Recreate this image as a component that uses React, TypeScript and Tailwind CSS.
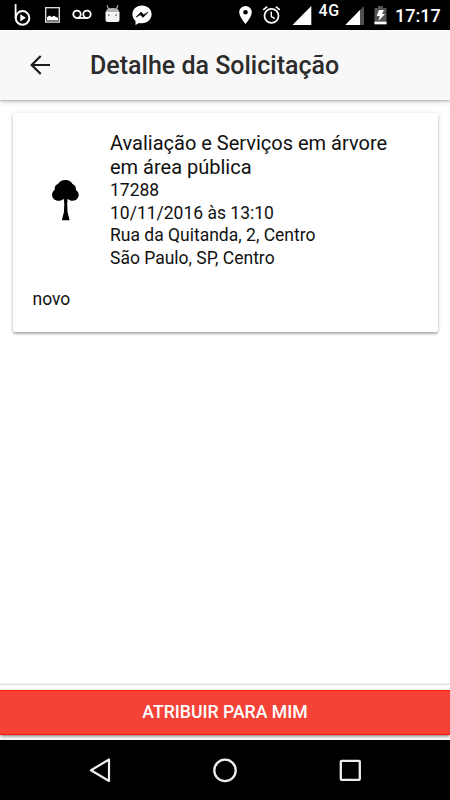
import React from "react";

function StatusBar() {
  return (
    <div className="flex h-[30px] shrink-0 items-center justify-between bg-black pl-[13px] pr-[9px] text-white">
      <div className="flex h-full items-center">
        <svg className="h-[30px] w-[20px]" viewBox="0 0 20 30" fill="none">
          <path d="M2.6 4V18" stroke="#fff" strokeWidth="1.800" />
          <circle cx="9.500" cy="17.900" r="6.800" stroke="#fff" strokeWidth="2" />
          <path d="M7.300 14.200l5.600 3.600-5.600 3.700z" fill="#fff" />
        </svg>
        <svg className="ml-[12px] h-[30px] w-[15px]" viewBox="0 0 15 30" fill="none">
          <rect x=".7" y="7.700" width="13.600" height="14.400" stroke="#e6e6e6" strokeWidth="1.300" />
          <path d="M2 20.500v-3.200l2.300-1.800 2.500 1.400 2-1.200L13 18v2.500z" fill="#fff" />
        </svg>
        <svg className="ml-[12px] h-[30px] w-[20px]" viewBox="0 0 20 30" fill="none" stroke="#fff" strokeWidth="1.800">
          <circle cx="5" cy="14.300" r="3.700" />
          <circle cx="15" cy="14.300" r="3.700" />
          <path d="M5 18h10" />
        </svg>
        <svg className="ml-[13px] h-[30px] w-[15px]" viewBox="0 0 15 30">
          <path d="M2 5.200l1.800 4.200M13 5.200l-1.800 4.200" stroke="#aaa" strokeWidth="1.200" />
          <path d="M.7 12.500C.8 9.300 3.500 8 7.500 8s6.700 1.300 6.800 4.500z" fill="#b4b4b4" />
          <path d="M.5 12h14v7.500q0 2.500-2.500 2.500H3q-2.500 0-2.500-2.500z" fill="#f4f4f4" />
          <circle cx="3.800" cy="15" r=".8" fill="#444" />
          <circle cx="11.200" cy="15" r=".8" fill="#444" />
        </svg>
        <svg className="ml-[12px] h-[30px] w-[20px]" viewBox="0 0 20 30">
          <path d="M10 5.500C4.500 5.500.4 9.300.4 14.300c0 2.700 1.200 5 3.100 6.600v4l3.500-2c1 .2 2 .3 3 .3 5.500 0 9.600-3.900 9.600-8.900S15.500 5.500 10 5.500z" fill="#fff" />
          <path d="M4 17.200l5-5.200 2.700 2.700 4.300-2.500-5 5.200-2.700-2.700z" fill="#000" stroke="#000" strokeWidth=".6" />
        </svg>
      </div>
      <div className="flex h-full items-center">
        <svg className="h-[30px] w-[13px]" viewBox="0 0 13 30">
          <path fillRule="evenodd" d="M6.500 6A6.300 6.300 0 0 0 .2 12.300C.2 17 6.500 24 6.500 24s6.300-7 6.300-11.700A6.300 6.300 0 0 0 6.500 6zm0 4a2.300 2.300 0 1 1 0 4.600 2.300 2.300 0 0 1 0-4.600z" fill="#fff" />
        </svg>
        <svg className="ml-[10px] h-[30px] w-[19px]" viewBox="0 0 19 30" fill="none" stroke="#fff">
          <circle cx="9.500" cy="15.900" r="7" strokeWidth="1.700" />
          <path d="M1.200 9.800L5.200 6.600M17.800 9.800l-4-3.200" strokeWidth="1.700" />
          <path d="M9.300 11.500v5l3.500 2.100" strokeWidth="1.400" />
        </svg>
        <svg className="ml-[11px] h-[30px] w-[20px]" viewBox="0 0 20 30">
          <path d="M.500 25L19.300 6v19z" fill="#fff" />
        </svg>
        <span className="ml-[7px] w-[22px] -translate-y-[4px] whitespace-nowrap text-[16px] leading-none font-medium tracking-[.6px]">4G</span>
        <svg className="ml-[4px] h-[30px] w-[20px]" viewBox="0 0 20 30">
          <path d="M.300 25L19 6v19z" fill="#505050" />
          <path d="M.300 25L15 10v15z" fill="#fff" />
        </svg>
        <svg className="ml-[9.500px] h-[30px] w-[13px]" viewBox="0 0 13 30">
          <path d="M4 6h5v2h3.500v16.300H.5V8H4z" fill="#555" />
          <path d="M.5 21.700h12v2.600H.5z" fill="#fff" />
          <path d="M5 10h5l-2 4h3l-6.500 7 1.300-5H2.700z" fill="#fff" />
        </svg>
        <span className="ml-[8px] w-[46px] translate-y-px whitespace-nowrap text-[18px] leading-[30px] font-medium">17:17</span>
      </div>
    </div>
  );
}

function Header() {
  return (
    <header className="relative z-10 flex h-[70px] shrink-0 items-center bg-[#f8f8f8] shadow-[0_1px_2px_rgba(0,0,0,.26),0_3px_5px_rgba(0,0,0,.1)]">
      <svg className="ml-[30px] h-[20px] w-[20px]" viewBox="0 0 20 20" fill="none" stroke="#1c1c1c" strokeWidth="2.200">
        <path d="M20 10H2M10.700 1L1.700 10l9 9" />
      </svg>
      <h1 className="ml-[40px] translate-y-px whitespace-nowrap text-[25px] font-medium text-[#2c2c2c]">Detalhe da Solicitação</h1>
    </header>
  );
}

function TreeIcon() {
  return (
    <svg className="mt-[49px] ml-[39px] h-[41px] w-[27px] shrink-0" viewBox="0 0 27 41">
      <path d="M13.300 0C10 0 7.500 1.500 6.200 3.800 3.500 4.800 2.300 7 2.800 9.700 1 10.800.1 12.700.1 14.700c0 3.500 2.700 6 6.300 6 1.800 0 3.400-.5 4.700-1.500h.8l.4 5-.4 8-2.100 8h7.800l-2-8-.4-8 .3-5h.9c1.200 1 2.700 1.500 4.400 1.500 3.300 0 5.900-2.500 5.900-5.900 0-2-1-3.800-2.800-4.900.4-2.700-.9-5-3.400-5.900C19.200 1.500 16.800 0 13.300 0z" fill="#000" />
    </svg>
  );
}

function RequestCard() {
  return (
    <section className="mx-[12.500px] mt-[13px] h-[219px] rounded-[2.500px] bg-white text-[17.500px] leading-[22.500px] text-[#111] shadow-[0_2px_2px_rgba(0,0,0,.2),0_1px_4px_rgba(0,0,0,.2)]">
      <div className="flex h-[175px] pt-[18px]">
        <TreeIcon />
        <div className="ml-[31.500px]">
          <h2 className="text-[20px] leading-[24px]">
            Avaliação e Serviços em árvore
            <br />
            em área pública
          </h2>
          <p>17288</p>
          <p>10/11/2016 às 13:10</p>
          <p>Rua da Quitanda, 2, Centro</p>
          <p>São Paulo, SP, Centro</p>
        </div>
      </div>
      <p className="ml-[20px]">novo</p>
    </section>
  );
}

function NavigationBar() {
  return (
    <nav className="flex h-[60px] shrink-0 items-center justify-center gap-[100px] bg-black">
      <svg className="h-[25px] w-[25px]" viewBox="0 0 25 25" fill="none" stroke="#eee" strokeWidth="2.200" strokeLinejoin="round">
        <path d="M21 1.500v21.500L3 12.300z" />
      </svg>
      <svg className="h-[25px] w-[25px]" viewBox="0 0 25 25" fill="none" stroke="#eee" strokeWidth="2.300">
        <circle cx="12" cy="12.400" r="10.700" />
      </svg>
      <svg className="h-[25px] w-[25px]" viewBox="0 0 25 25" fill="none" stroke="#eee" strokeWidth="2.300">
        <rect x="2.800" y="2.800" width="19" height="19" rx=".8" />
      </svg>
    </nav>
  );
}

export default function App() {
  return (
    <div className="flex h-[800px] w-[450px] flex-col overflow-hidden bg-white font-['Roboto',sans-serif]">
      <StatusBar />
      <Header />
      <main className="flex-1 bg-white">
        <RequestCard />
      </main>
      <footer className="h-[56px] shrink-0 border-t border-[#dedede] bg-white pt-[5px] shadow-[0_-1px_1px_rgba(0,0,0,.06)]">
        <button className="block h-[45px] w-full border-y border-[#ff1a0a] bg-[#f44336] text-center text-[17.650px] leading-[43px] font-medium text-white shadow-[0_2px_2px_-1px_rgba(0,0,0,.35),0_2px_5px_rgba(0,0,0,.25)]">
          ATRIBUIR PARA MIM
        </button>
      </footer>
      <NavigationBar />
    </div>
  );
}
